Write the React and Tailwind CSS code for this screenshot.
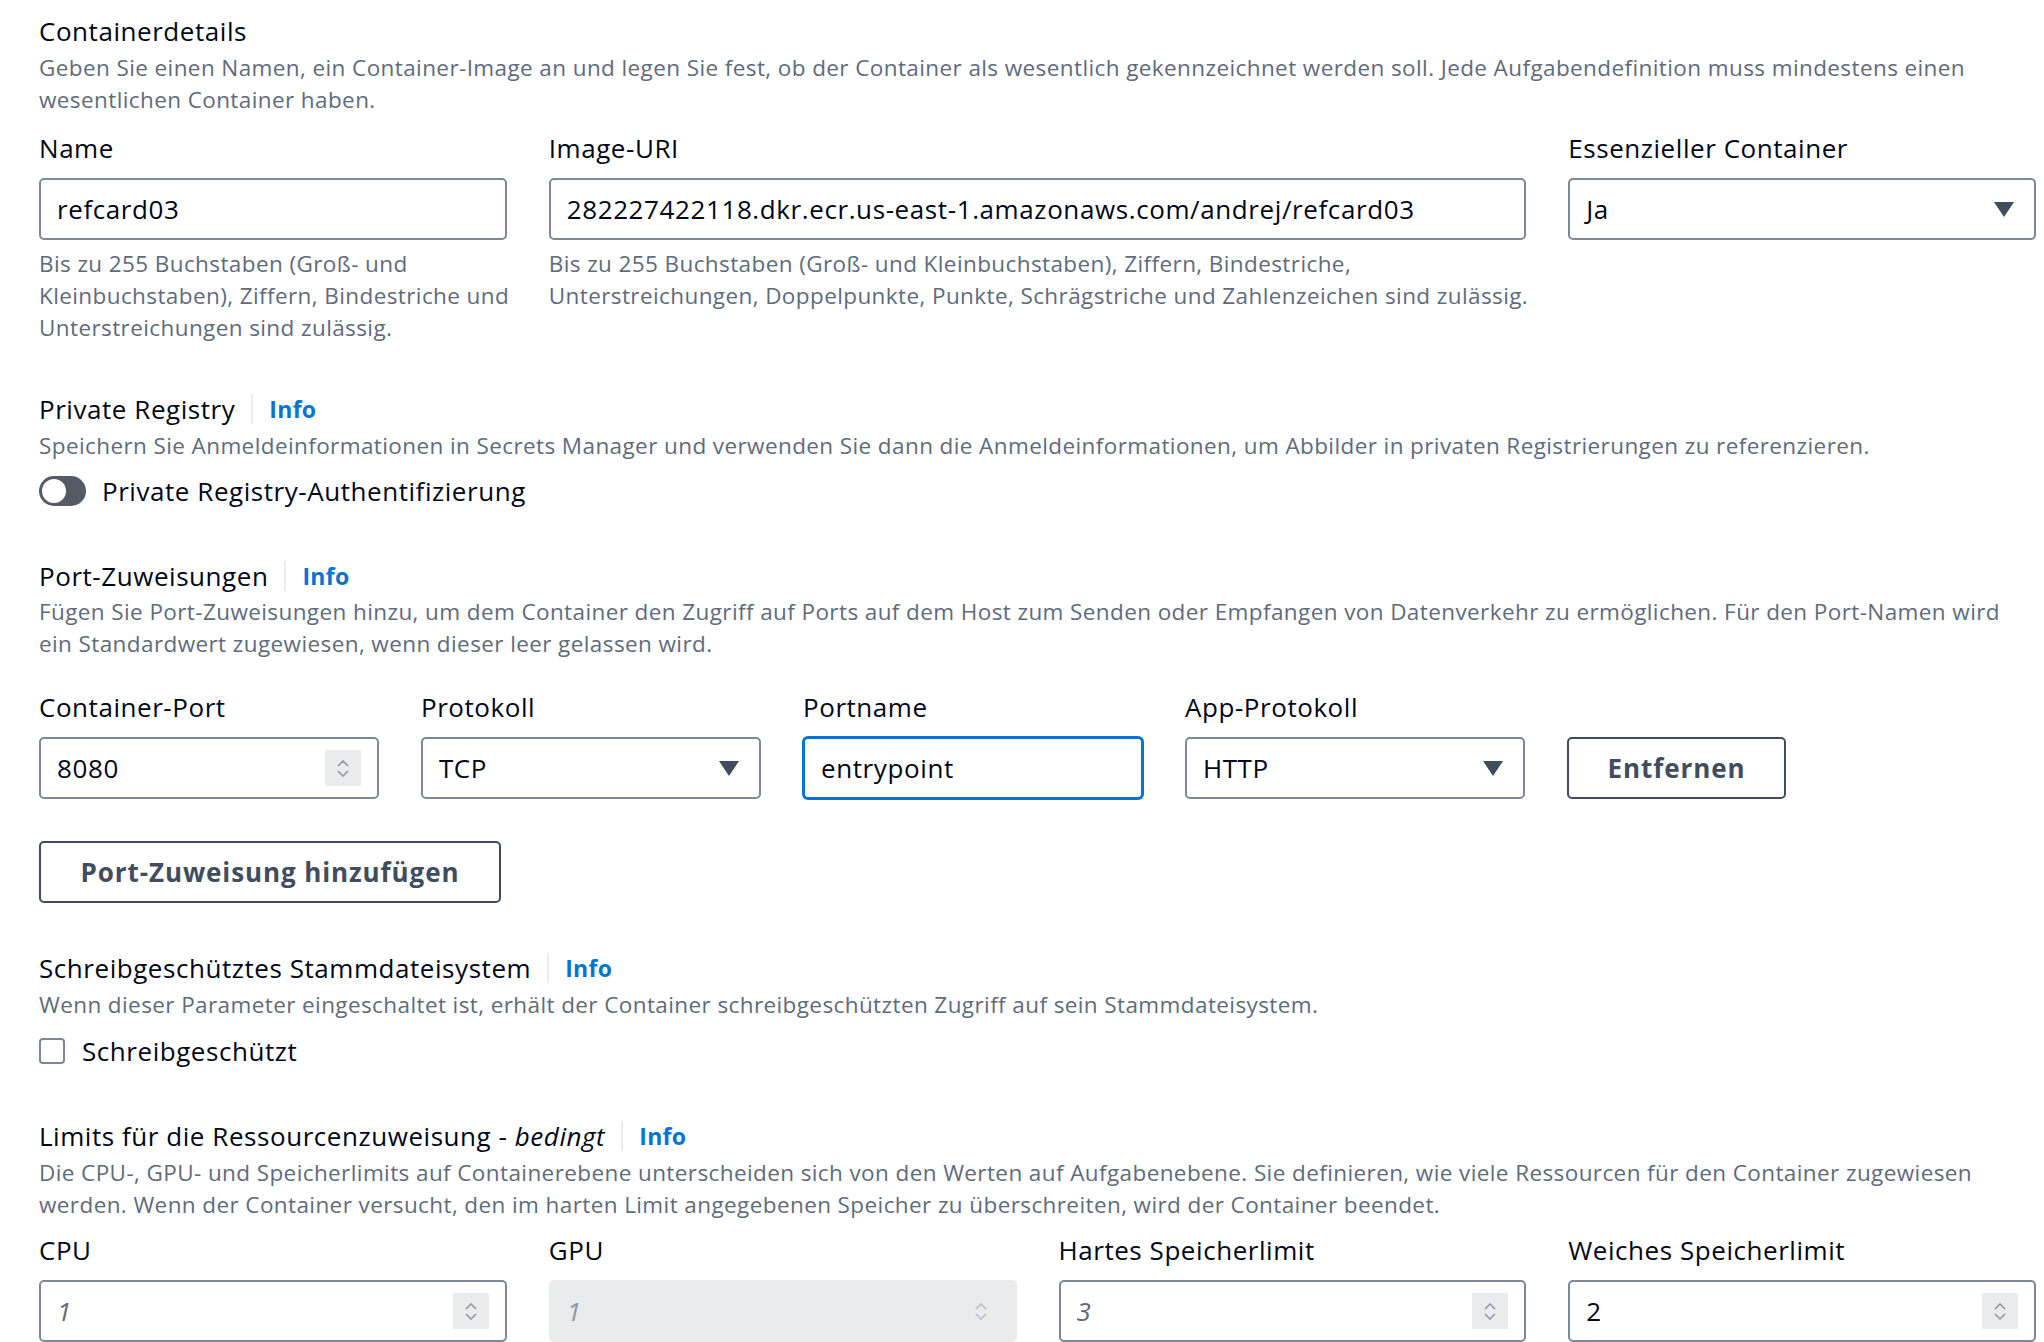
import React from "react";

const F = { fontFamily: "'Open Sans', 'Noto Sans', sans-serif" };

const BIG = "text-[26px] tracking-[0.55px] leading-[32px] text-[#000716]";

function Heading({ children, info = true }) {
  return (
    <div className="flex items-center h-[32px]">
      <div className={BIG}>{children}</div>
      {info && (
        <>
          <div className="mx-[16px] h-[30px] w-[2px] bg-[#e9ebed]" />
          <div className="text-[23px] tracking-[0.3px] leading-[32px] font-bold text-[#0972d3]">Info</div>
        </>
      )}
    </div>
  );
}

function Desc({ children, className = "" }) {
  return (
    <div className={"text-[22.5px] tracking-[0.4px] leading-[32px] text-[#5f6b7a] " + className}>{children}</div>
  );
}

function Label({ children }) {
  return <div className={BIG + " mb-[14px]"}>{children}</div>;
}

function Spinner({ disabled }) {
  return (
    <div
      className={
        "w-[36px] h-[36px] flex flex-col items-center justify-center gap-[3px] " + (disabled ? "" : "bg-[#e9ebed]")
      }
    >
      <svg width="12" height="7" viewBox="0 0 12 7">
        <path d="M1 6 L6 1 L11 6" fill="none" stroke={disabled ? "#b6bec9" : "#8d99a8"} strokeWidth="1.6" />
      </svg>
      <svg width="12" height="7" viewBox="0 0 12 7">
        <path d="M1 1 L6 6 L11 1" fill="none" stroke={disabled ? "#b6bec9" : "#8d99a8"} strokeWidth="1.6" />
      </svg>
    </div>
  );
}

function Input({ value, placeholder, number, disabled, focus }) {
  const box = disabled
    ? "border-[#e9ebed] bg-[#e9ebed]"
    : focus
    ? "border-[#0972d3] bg-white ring-1 ring-[#0972d3]"
    : "border-[#7d8998] bg-white";
  return (
    <div className={"h-[62px] rounded-[5px] border-2 flex items-center justify-between pl-[16px] pr-[16px] " + box}>
      <span
        className={
          "text-[26px] tracking-[0.6px] leading-[32px] whitespace-nowrap " +
          (placeholder ? "italic " + (disabled ? "text-[#8d99a8]" : "text-[#5f6b7a]") : "text-[#000716]")
        }
      >
        {value}
      </span>
      {number && <Spinner disabled={disabled} />}
    </div>
  );
}

function Select({ value }) {
  return (
    <div className="h-[62px] rounded-[5px] border-2 border-[#7d8998] bg-white flex items-center justify-between pl-[16px] pr-[20px]">
      <span className="text-[26px] tracking-[0.55px] leading-[32px] text-[#000716]">{value}</span>
      <svg width="20" height="15" viewBox="0 0 20 15">
        <polygon points="0,0 20,0 10,15" fill="#414d5c" />
      </svg>
    </div>
  );
}

function Button({ children, className = "" }) {
  return (
    <div
      className={
        "h-[62px] rounded-[5px] border-2 border-[#414d5c] bg-white flex items-center justify-center text-[26px] tracking-[0.9px] font-bold text-[#414d5c] whitespace-nowrap " +
        className
      }
    >
      {children}
    </div>
  );
}

export default function App() {
  return (
    <div style={F} className="min-h-screen bg-white pl-[39px] pr-[8px] pt-[15px]">
      {/* Containerdetails */}
      <Heading info={false}>Containerdetails</Heading>
      <Desc className="mt-[5px] leading-[31px]">
        Geben Sie einen Namen, ein Container-Image an und legen Sie fest, ob der Container als wesentlich gekennzeichnet
        werden soll. Jede Aufgabendefinition muss mindestens einen wesentlichen Container haben.
      </Desc>

      <div className="grid grid-cols-4 gap-x-[42px] mt-[16px]">
        <div>
          <Label>Name</Label>
          <Input value="refcard03" />
          <Desc className="mt-[8px] whitespace-nowrap">
            Bis zu 255 Buchstaben (Groß- und
            <br />
            Kleinbuchstaben), Ziffern, Bindestriche und
            <br />
            Unterstreichungen sind zulässig.
          </Desc>
        </div>
        <div className="col-span-2">
          <Label>Image-URI</Label>
          <Input value="282227422118.dkr.ecr.us-east-1.amazonaws.com/andrej/refcard03" />
          <Desc className="mt-[8px] whitespace-nowrap">
            Bis zu 255 Buchstaben (Groß- und Kleinbuchstaben), Ziffern, Bindestriche,
            <br />
            Unterstreichungen, Doppelpunkte, Punkte, Schrägstriche und Zahlenzeichen sind zulässig.
          </Desc>
        </div>
        <div>
          <Label>Essenzieller Container</Label>
          <Select value="Ja" />
        </div>
      </div>

      {/* Private Registry */}
      <div className="mt-[49px]">
        <Heading>Private Registry</Heading>
        <Desc className="mt-[5px]">
          Speichern Sie Anmeldeinformationen in Secrets Manager und verwenden Sie dann die Anmeldeinformationen, um Abbilder
          in privaten Registrierungen zu referenzieren.
        </Desc>
        <div className="mt-[13px] flex items-center gap-[16px] h-[32px]">
          <div className="w-[47px] h-[30px] rounded-full bg-[#545b64] flex items-center px-[3px]">
            <div className="w-[24px] h-[24px] rounded-full bg-white" />
          </div>
          <span className={BIG}>Private Registry-Authentifizierung</span>
        </div>
      </div>

      {/* Port-Zuweisungen */}
      <div className="mt-[53px]">
        <Heading>Port-Zuweisungen</Heading>
        <Desc className="mt-[4px]">
          Fügen Sie Port-Zuweisungen hinzu, um dem Container den Zugriff auf Ports auf dem Host zum Senden oder Empfangen von
          Datenverkehr zu ermöglichen. Für den Port-Namen wird ein Standardwert zugewiesen, wenn dieser leer gelassen wird.
        </Desc>
        <div className="grid grid-cols-[340px_340px_340px_340px_219px] gap-x-[42px] mt-[31px] items-end">
          <div>
            <Label>Container-Port</Label>
            <Input value="8080" number />
          </div>
          <div>
            <Label>Protokoll</Label>
            <Select value="TCP" />
          </div>
          <div>
            <Label>Portname</Label>
            <Input value="entrypoint" focus />
          </div>
          <div>
            <Label>App-Protokoll</Label>
            <Select value="HTTP" />
          </div>
          <Button>Entfernen</Button>
        </div>
        <Button className="mt-[42px] w-[462px]">Port-Zuweisung hinzufügen</Button>
      </div>

      {/* Schreibgeschützt */}
      <div className="mt-[49px]">
        <Heading>Schreibgeschütztes Stammdateisystem</Heading>
        <Desc className="mt-[5px]">
          Wenn dieser Parameter eingeschaltet ist, erhält der Container schreibgeschützten Zugriff auf sein Stammdateisystem.
        </Desc>
        <div className="mt-[14px] flex items-center gap-[17px] h-[32px]">
          <div className="w-[26px] h-[26px] rounded-[4px] border-2 border-[#7d8998] bg-white" />
          <span className={BIG}>Schreibgeschützt</span>
        </div>
      </div>

      {/* Limits */}
      <div className="mt-[53px]">
        <Heading>
          Limits für die Ressourcenzuweisung - <i>bedingt</i>
        </Heading>
        <Desc className="mt-[5px]">
          Die CPU-, GPU- und Speicherlimits auf Containerebene unterscheiden sich von den Werten auf Aufgabenebene. Sie
          definieren, wie viele Ressourcen für den Container zugewiesen werden. Wenn der Container versucht, den im harten
          Limit angegebenen Speicher zu überschreiten, wird der Container beendet.
        </Desc>
        <div className="grid grid-cols-4 gap-x-[42px] mt-[13px] pb-[40px]">
          <div>
            <Label>CPU</Label>
            <Input value="1" placeholder number />
          </div>
          <div>
            <Label>GPU</Label>
            <Input value="1" placeholder number disabled />
          </div>
          <div>
            <Label>Hartes Speicherlimit</Label>
            <Input value="3" placeholder number />
          </div>
          <div>
            <Label>Weiches Speicherlimit</Label>
            <Input value="2" number />
          </div>
        </div>
      </div>
    </div>
  );
}
